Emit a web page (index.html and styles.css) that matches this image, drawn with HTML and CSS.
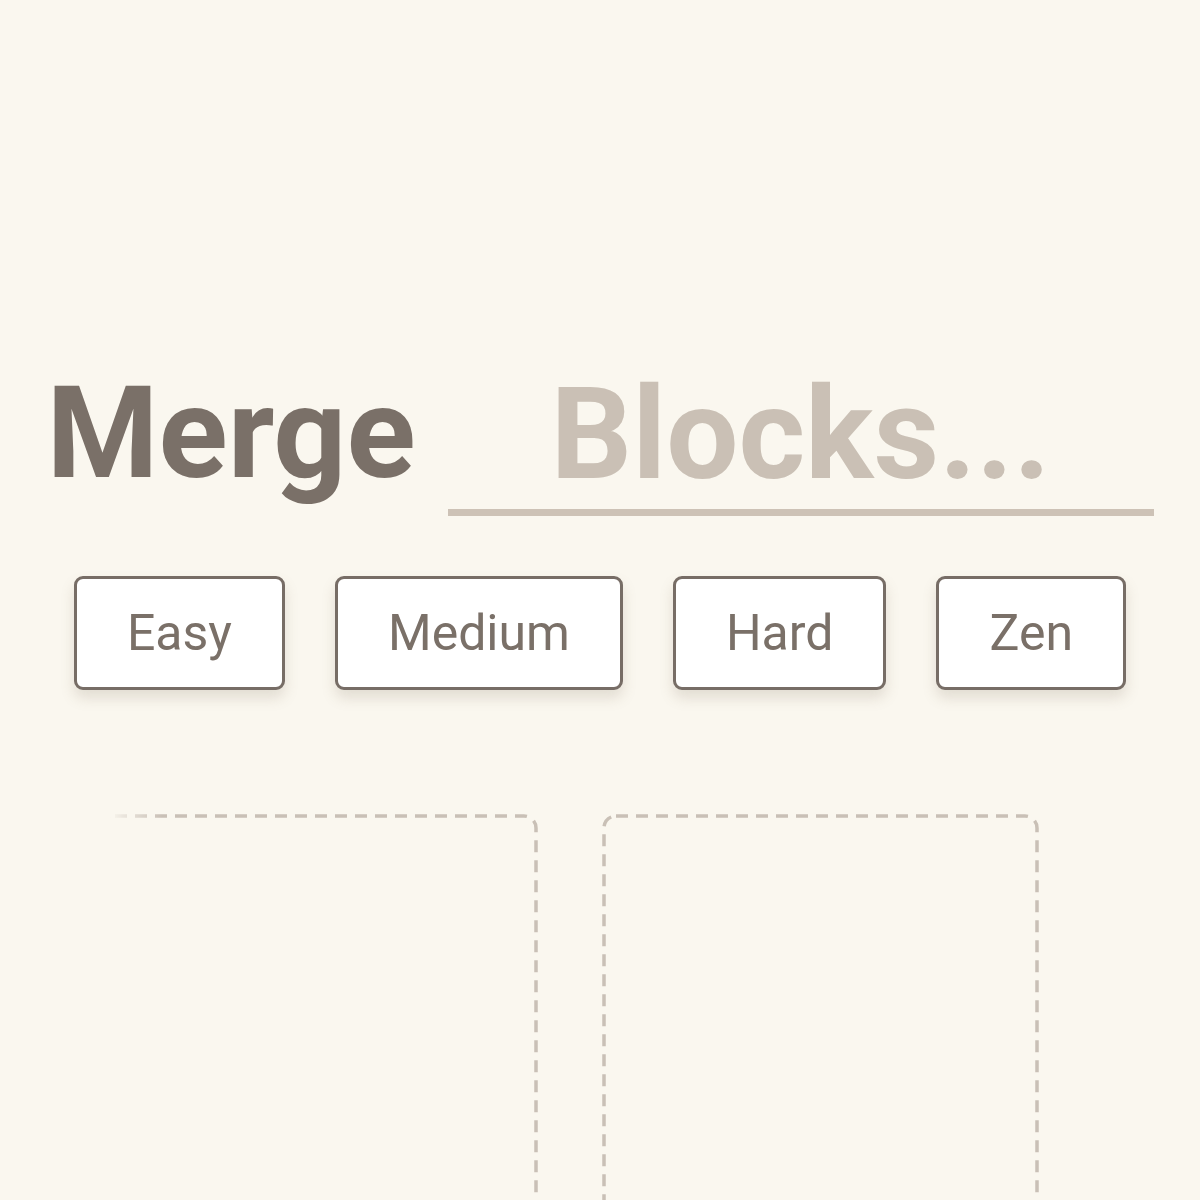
FILE: index.html
```html
<!DOCTYPE html>
<html lang="en">
<head>
    <meta charset="UTF-8">
    <meta name="viewport" content="width=device-width, initial-scale=1.0">
    <title>Merge Blocks</title>
    <link rel="stylesheet" href="styles.css">
</head>
<body>
    <div class="title-row">
        <span class="title-word">Merge</span>
        <div class="title-input">Blocks...</div>
    </div>

    <div class="modes">
        <button class="mode-btn">Easy</button>
        <button class="mode-btn">Medium</button>
        <button class="mode-btn">Hard</button>
        <button class="mode-btn">Zen</button>
    </div>

    <div class="boards">
        <div class="board board-faded">
            <svg class="board-outline" width="437" height="420">
                <rect x="2" y="2" width="433" height="416" rx="12" ry="12" />
            </svg>
        </div>
        <div class="board">
            <svg class="board-outline" width="437" height="420">
                <rect x="2" y="2" width="433" height="416" rx="12" ry="12" />
            </svg>
        </div>
    </div>
</body>
</html>
```

FILE: styles.css
```css
body {
    margin: 0;
    background: #faf7ef;
    font-family: Roboto, "Liberation Sans", sans-serif;
    color: #7a7068;
    overflow: hidden;
    height: 1200px;
}
.title-row {
    display: flex;
    justify-content: center;
    align-items: flex-end;
    gap: 32px;
    margin-top: 358px;
}
.title-word {
    font-size: 128px;
    font-weight: 700;
    line-height: 150px;
    color: #7a7068;
    padding-bottom: 8px;
}
.title-input {
    width: 706px;
    text-align: center;
    font-size: 128px;
    font-weight: 700;
    line-height: 150px;
    color: #cac0b5;
    border-bottom: 7px solid #cdc2b6;
}
.modes {
    display: flex;
    justify-content: center;
    gap: 50px;
    margin-top: 60px;
}
.mode-btn {
    font-family: Roboto, "Liberation Sans", sans-serif;
    font-size: 50px;
    line-height: 60px;
    color: #7a7068;
    background: #fff;
    border: 3px solid #776d66;
    border-radius: 9px;
    padding: 24px 50px;
    box-shadow: 0 8px 14px rgba(120, 105, 85, 0.18);
}
.boards {
    display: flex;
    gap: 64px;
    margin-top: 124px;
    padding-left: 101px;
}
.board {
    position: relative;
    width: 437px;
    height: 420px;
    flex-shrink: 0;
}
.board-outline {
    position: absolute;
    top: 0;
    left: 0;
}
.board-outline rect {
    fill: none;
    stroke: #c9c0b6;
    stroke-width: 3.5;
    stroke-dasharray: 12 8;
}
.board-faded {
    -webkit-mask-image: linear-gradient(to right, transparent 0, transparent 2%, rgba(0,0,0,0.3) 5%, #000 14%);
    mask-image: linear-gradient(to right, transparent 0, transparent 2%, rgba(0,0,0,0.3) 5%, #000 14%);
}
```
